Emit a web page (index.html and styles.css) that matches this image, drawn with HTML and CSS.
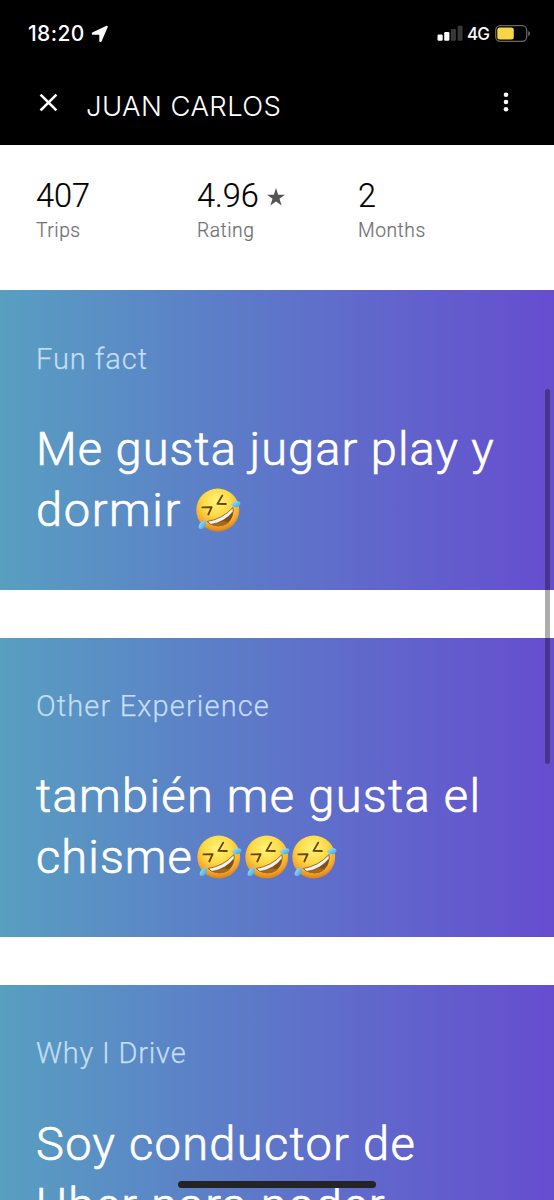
FILE: index.html
```
<!DOCTYPE html>
<html lang="es">
<head>
<meta charset="utf-8">
<title>Driver profile</title>
<link rel="stylesheet" href="styles.css">
</head>
<body>
<svg class="defs" aria-hidden="true">
  <defs>
    <radialGradient id="face" cx=".48" cy=".3" r=".72">
      <stop offset="0" stop-color="#fff47c"/><stop offset=".48" stop-color="#fcd943"/><stop offset=".78" stop-color="#f4aa2f"/><stop offset="1" stop-color="#d57c16"/>
    </radialGradient>
    <linearGradient id="tear" x1="0" y1="0" x2="1" y2="1">
      <stop offset="0" stop-color="#a9ecff"/><stop offset="1" stop-color="#359fe0"/>
    </linearGradient>
    <symbol id="rofl" viewBox="0 0 48 46">
      <circle cx="23" cy="23" r="21.7" fill="url(#face)"/>
      <path d="M7.500 20.400 16.800 20.200 13.500 27.500M27.500 8.500 22.700 16.800 31.200 17" fill="none" stroke="#69430b" stroke-width="1.900" stroke-linecap="round" stroke-linejoin="round"/>
      <path d="M12.500 34.600Q28 32 38.400 20.500C40 29 35.500 36.600 28 38.700C21.500 40.400 15.800 38.500 12.500 34.600Z" fill="#815014"/>
      <path d="M17 38Q23 33.500 30 34.600Q34 35 34.500 35.500Q27 42 17 38Z" fill="#a4691d"/>
      <path d="M12.500 34.600Q28 32 38.400 20.500L38.500 24.500Q30 35.500 16 37.600Z" fill="#f5f3f2" stroke="#744b19" stroke-width=".7"/>
      <path d="M36 17.500C39 14.500 42 13.600 44.800 14.700C47 16 45.800 19 43 20C40.500 20.600 38 19.600 36 17.500Z" fill="url(#tear)"/>
      <path d="M10.600 33C6.500 34.200 3.400 37.300 3.700 40.700C5 43.500 9 42.400 10.100 39.500C11 37.300 11 35.200 10.600 33Z" fill="url(#tear)"/>
    </symbol>
  </defs>
</svg>
<div class="screen">
  <header class="top">
    <div class="status">
      <span class="time">18:20</span>
      <svg class="loc" viewBox="0 0 18 18"><path d="M15.900 1.600 9.800 16H9.200V8.800H1.700V8.400Z" fill="#fff" stroke="#fff" stroke-width="1.800" stroke-linejoin="round"/></svg>
      <svg class="signal" viewBox="0 0 26 17"><rect x=".5" y="9.500" width="5.200" height="6.300" rx="1.300" fill="#fff"/><rect x="7.200" y="7" width="5.200" height="8.800" rx="1.300" fill="#fff"/><rect x="13.900" y="4" width="5" height="11.800" rx="1.300" fill="#383838"/><rect x="20.600" y=".7" width="5" height="15.100" rx="1.300" fill="#383838"/></svg>
      <span class="net">4G</span>
      <svg class="battery" viewBox="0 0 36 18"><rect x=".7" y=".7" width="31" height="15.600" rx="4.500" fill="none" stroke="#666" stroke-width="1.300"/><rect x="2.300" y="2.500" width="16.500" height="12" rx="2.500" fill="#f7d547"/><path d="M33.300 6Q35 6.500 35 8.500T33.300 11Z" fill="#777"/></svg>
    </div>
    <div class="bar">
      <svg class="close" viewBox="0 0 18 18"><path d="M1.500 1.500 16.500 16.500M16.500 1.500 1.500 16.500" stroke="#fff" stroke-width="2.500"/></svg>
      <h1 class="name">JUAN CARLOS</h1>
      <svg class="more" viewBox="0 0 6 20"><circle cx="3" cy="2.700" r="2.300" fill="#fff"/><circle cx="3" cy="10" r="2.300" fill="#fff"/><circle cx="3" cy="17.300" r="2.300" fill="#fff"/></svg>
    </div>
  </header>
  <section class="stats">
    <div class="stat"><div class="value">407</div><div class="caption">Trips</div></div>
    <div class="stat"><div class="value">4.96<svg class="star" viewBox="0 0 18 18"><path d="M9 0 11.200 6.700H18L12.500 10.800 14.600 17.600 9 13.500 3.400 17.600 5.500 10.800 0 6.700H6.800Z" fill="#555"/></svg></div><div class="caption">Rating</div></div>
    <div class="stat"><div class="value">2</div><div class="caption">Months</div></div>
  </section>
  <main class="cards">
    <article class="card">
      <h2 class="label fact">Fun fact</h2>
      <p class="line l1">Me gusta jugar play y</p>
      <p class="line l2">dormir <svg class="emoji"><use href="#rofl"/></svg></p>
    </article>
    <article class="card">
      <h2 class="label exp">Other Experience</h2>
      <p class="line l3">también me gusta el</p>
      <p class="line l4">chisme<svg class="emoji"><use href="#rofl"/></svg><svg class="emoji"><use href="#rofl"/></svg><svg class="emoji"><use href="#rofl"/></svg></p>
    </article>
    <article class="card">
      <h2 class="label why">Why I Drive</h2>
      <p class="line l5">Soy conductor de</p>
      <p class="line l6">Uber para poder</p>
    </article>
  </main>
  <div class="scrollbar"></div>
  <div class="home"></div>
</div>
</body>
</html>
```
FILE: styles.css
```
* { box-sizing: border-box; }
body, h1, h2, p { margin: 0; font-weight: inherit; }
body { background: #fff; font-family: Roboto, "Open Sans", sans-serif; font-weight: 300; }
.defs { position: absolute; width: 0; height: 0; }
.screen { position: relative; width: 554px; height: 1200px; overflow: hidden; }

.top { height: 145px; background: #000; color: #fff; font-family: Inter, sans-serif; }
.status { display: flex; align-items: center; height: 67px; padding: 0 23px 0 28px; }
.time { font-size: 21px; font-weight: 500; width: 63px; letter-spacing: .4px; }
.loc { width: 18px; height: 18px; }
.signal { width: 26px; height: 17px; margin: -1px 0 0 auto; }
.net { font-size: 17px; font-weight: 500; width: 22px; margin: 0 6px 0 4px; letter-spacing: -.8px; }
.battery { width: 36px; height: 18px; }
.bar { display: flex; align-items: center; height: 78px; padding: 0 45px 8px 39px; }
.close { width: 19px; height: 19px; }
.name { font-size: 27.5px; font-weight: 300; line-height: 34px; letter-spacing: .4px; margin: 8px 0 0 28px; white-space: nowrap; }
.more { width: 6px; height: 20px; margin: -1px 0 0 auto; }

.stats { display: grid; grid-template-columns: 161px 161px 1fr; height: 145.4px; padding: 32px 36px 0; }
.value { display: flex; align-items: center; color: #000; font-size: 32.5px; line-height: 38px; -webkit-text-stroke: .2px; }
.star { width: 18px; height: 18px; margin: 2px 0 0 8px; }
.caption { color: #707070; font-size: 19.3px; line-height: 24px; margin-top: 4px; letter-spacing: .5px; -webkit-text-stroke: .2px; }

.cards { display: grid; gap: 48px; }
.card { height: 299.4px; padding: 50.2px 36px 0; color: #fff; background: linear-gradient(90deg, #589fc1 0%, #5c7dc8 40%, #664dcf 100%); }
.label { color: #c4def4; font-size: 29px; line-height: 36px; margin-bottom: 41.5px; -webkit-text-stroke: .25px; }
.fact { letter-spacing: .95px; }
.exp { letter-spacing: 1.15px; }
.why { letter-spacing: .8px; }
.line { font-size: 47px; line-height: 61px; height: 61px; white-space: nowrap; -webkit-text-stroke: .7px; }
.l1 { letter-spacing: 1.05px; }
.l2 { letter-spacing: 1.6px; }
.l3 { letter-spacing: 1.33px; }
.l4 { letter-spacing: 1.1px; }
.l5 { letter-spacing: 1.32px; }
.l6 { letter-spacing: 1.33px; }
.emoji { width: 47.5px; height: 46px; vertical-align: -7px; -webkit-text-stroke: 0; }
.l4 .emoji:first-child { margin-left: 3px; }

.scrollbar { position: absolute; top: 389px; right: 4px; width: 5px; height: 375px; border-radius: 3px; background: rgba(0, 0, 0, .32); }
.home { position: absolute; left: 178px; bottom: 12px; width: 198px; height: 7px; border-radius: 4px; background: #242424; }
```
